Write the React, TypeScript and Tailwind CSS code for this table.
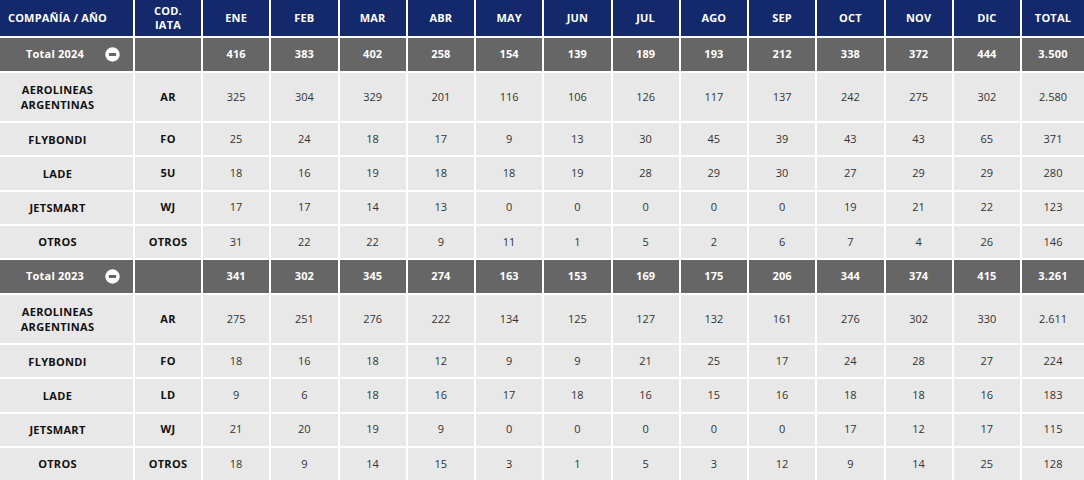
import React from "react";

const months = ["ENE", "FEB", "MAR", "ABR", "MAY", "JUN", "JUL", "AGO", "SEP", "OCT", "NOV", "DIC"];

type Row = { name: string[]; code: string; vals: string[]; total: string };
type Block = { label: string; vals: string[]; total: string; rows: Row[] };

const blocks: Block[] = [
  {
    label: "Total 2024",
    vals: ["416", "383", "402", "258", "154", "139", "189", "193", "212", "338", "372", "444"],
    total: "3.500",
    rows: [
      { name: ["AEROLINEAS", "ARGENTINAS"], code: "AR", vals: ["325", "304", "329", "201", "116", "106", "126", "117", "137", "242", "275", "302"], total: "2.580" },
      { name: ["FLYBONDI"], code: "FO", vals: ["25", "24", "18", "17", "9", "13", "30", "45", "39", "43", "43", "65"], total: "371" },
      { name: ["LADE"], code: "5U", vals: ["18", "16", "19", "18", "18", "19", "28", "29", "30", "27", "29", "29"], total: "280" },
      { name: ["JETSMART"], code: "WJ", vals: ["17", "17", "14", "13", "0", "0", "0", "0", "0", "19", "21", "22"], total: "123" },
      { name: ["OTROS"], code: "OTROS", vals: ["31", "22", "22", "9", "11", "1", "5", "2", "6", "7", "4", "26"], total: "146" },
    ],
  },
  {
    label: "Total 2023",
    vals: ["341", "302", "345", "274", "163", "153", "169", "175", "206", "344", "374", "415"],
    total: "3.261",
    rows: [
      { name: ["AEROLINEAS", "ARGENTINAS"], code: "AR", vals: ["275", "251", "276", "222", "134", "125", "127", "132", "161", "276", "302", "330"], total: "2.611" },
      { name: ["FLYBONDI"], code: "FO", vals: ["18", "16", "18", "12", "9", "9", "21", "25", "17", "24", "28", "27"], total: "224" },
      { name: ["LADE"], code: "LD", vals: ["9", "6", "18", "16", "17", "18", "16", "15", "16", "18", "18", "16"], total: "183" },
      { name: ["JETSMART"], code: "WJ", vals: ["21", "20", "19", "9", "0", "0", "0", "0", "0", "17", "12", "17"], total: "115" },
      { name: ["OTROS"], code: "OTROS", vals: ["18", "9", "14", "15", "3", "1", "5", "3", "12", "9", "14", "25"], total: "128" },
    ],
  },
];

const font = { fontFamily: '"Open Sans", "Liberation Sans", sans-serif' };

function MinusIcon() {
  return (
    <svg width="15" height="15" viewBox="0 0 15 15">
      <circle cx="7.5" cy="7.5" r="7.2" fill="#ffffff" />
      <rect x="3.8" y="6.1" width="7.4" height="2.8" rx="0.6" fill="#666666" />
    </svg>
  );
}

export default function App() {
  const grid = "grid grid-cols-[133px_66px_repeat(12,1fr)_62px] gap-[2px]";
  const hdr = "h-[36px] bg-[#13296b] text-white text-[11px] font-bold tracking-[0.2px] flex items-center justify-center";
  const tot = "h-[33px] bg-[#666666] text-white text-[11px] font-bold tracking-[0.2px] flex items-center";
  return (
    <div className="w-[1084px] h-[480px] bg-white overflow-hidden" style={font}>
      <div className={grid}>
        <div className={`${hdr} pr-[18px]`}>COMPAÑÍA / AÑO</div>
        <div className={`${hdr} flex-col leading-[14px]`}>
          <span>COD.</span>
          <span>IATA</span>
        </div>
        {months.map((m) => (
          <div key={m} className={hdr}>
            {m}
          </div>
        ))}
        <div className={hdr}>TOTAL</div>

        {blocks.map((b) => (
          <React.Fragment key={b.label}>
            <div className={`${tot} justify-end pr-[13px] gap-[21px]`}>
              <span>{b.label}</span>
              <MinusIcon />
            </div>
            <div className="h-[33px] bg-[#666666]" />
            {b.vals.map((v, i) => (
              <div key={i} className={`${tot} justify-center`}>
                {v}
              </div>
            ))}
            <div className={`${tot} justify-center`}>{b.total}</div>

            {b.rows.map((r) => {
              const h = r.name.length > 1 ? "h-[48px]" : "h-[32.25px]";
              return (
                <React.Fragment key={b.label + r.name.join()}>
                  <div className={`${h} bg-[#e8e8e8] text-[#111111] text-[11px] font-bold tracking-[0.3px] flex flex-col items-center justify-center pr-[18px] leading-[15px]`}>
                    {r.name.map((n) => (
                      <span key={n}>{n}</span>
                    ))}
                  </div>
                  <div className={`${h} bg-[#e8e8e8] text-[#111111] text-[11px] font-bold tracking-[0.3px] flex items-center justify-center`}>{r.code}</div>
                  {r.vals.map((v, i) => (
                    <div key={i} className={`${h} bg-[#e8e8e8] text-[#333333] text-[11px] flex items-center justify-center`}>
                      {v}
                    </div>
                  ))}
                  <div className={`${h} bg-[#e8e8e8] text-[#333333] text-[11px] flex items-center justify-center`}>{r.total}</div>
                </React.Fragment>
              );
            })}
          </React.Fragment>
        ))}
      </div>
    </div>
  );
}
